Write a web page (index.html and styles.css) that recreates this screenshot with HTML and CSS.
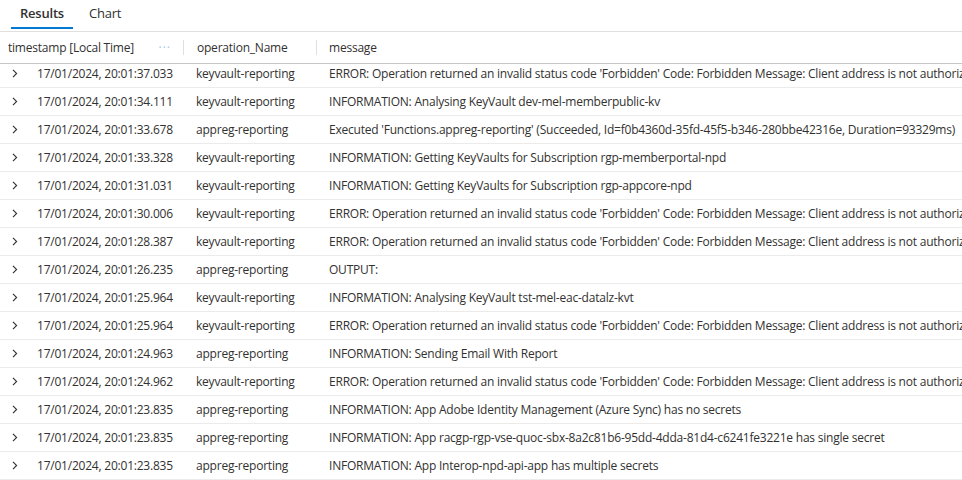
FILE: index.html
```html
<!DOCTYPE html>
<html>
<head>
<meta charset="utf-8">
<link rel="stylesheet" href="styles.css">
</head>
<body>
<div class="tabs">
  <div class="tab active">Results</div>
  <div class="tab">Chart</div>
</div>
<div class="grid">
  <div class="head">
    <div class="hcell c1"><span>timestamp [Local Time]</span><span class="dots">···</span></div>
    <div class="sep"></div>
    <div class="hcell c2">operation_Name</div>
    <div class="sep"></div>
    <div class="hcell c3">message</div>
  </div>
  <div class="body">
    <div class="row"><div class="cell c1"><span class="chev"><svg width="6" height="9" viewBox="0 0 6 9"><path d="M1 0.8 L4.6 4.5 L1 8.2" fill="none" stroke="#323130" stroke-width="1.1"/></svg></span>17/01/2024, 20:01:37.033</div><div class="cell c2">keyvault-reporting</div><div class="cell c3">ERROR: Operation returned an invalid status code 'Forbidden' Code: Forbidden Message: Client address is not authorized and caller is not a trusted service.</div></div>
    <div class="row"><div class="cell c1"><span class="chev"><svg width="6" height="9" viewBox="0 0 6 9"><path d="M1 0.8 L4.6 4.5 L1 8.2" fill="none" stroke="#323130" stroke-width="1.1"/></svg></span>17/01/2024, 20:01:34.111</div><div class="cell c2">keyvault-reporting</div><div class="cell c3">INFORMATION: Analysing KeyVault dev-mel-memberpublic-kv</div></div>
    <div class="row"><div class="cell c1"><span class="chev"><svg width="6" height="9" viewBox="0 0 6 9"><path d="M1 0.8 L4.6 4.5 L1 8.2" fill="none" stroke="#323130" stroke-width="1.1"/></svg></span>17/01/2024, 20:01:33.678</div><div class="cell c2">appreg-reporting</div><div class="cell c3">Executed 'Functions.appreg-reporting' (Succeeded, Id=f0b4360d-35fd-45f5-b346-280bbe42316e, Duration=93329ms)</div></div>
    <div class="row"><div class="cell c1"><span class="chev"><svg width="6" height="9" viewBox="0 0 6 9"><path d="M1 0.8 L4.6 4.5 L1 8.2" fill="none" stroke="#323130" stroke-width="1.1"/></svg></span>17/01/2024, 20:01:33.328</div><div class="cell c2">keyvault-reporting</div><div class="cell c3">INFORMATION: Getting KeyVaults for Subscription rgp-memberportal-npd</div></div>
    <div class="row"><div class="cell c1"><span class="chev"><svg width="6" height="9" viewBox="0 0 6 9"><path d="M1 0.8 L4.6 4.5 L1 8.2" fill="none" stroke="#323130" stroke-width="1.1"/></svg></span>17/01/2024, 20:01:31.031</div><div class="cell c2">keyvault-reporting</div><div class="cell c3">INFORMATION: Getting KeyVaults for Subscription rgp-appcore-npd</div></div>
    <div class="row"><div class="cell c1"><span class="chev"><svg width="6" height="9" viewBox="0 0 6 9"><path d="M1 0.8 L4.6 4.5 L1 8.2" fill="none" stroke="#323130" stroke-width="1.1"/></svg></span>17/01/2024, 20:01:30.006</div><div class="cell c2">keyvault-reporting</div><div class="cell c3">ERROR: Operation returned an invalid status code 'Forbidden' Code: Forbidden Message: Client address is not authorized and caller is not a trusted service.</div></div>
    <div class="row"><div class="cell c1"><span class="chev"><svg width="6" height="9" viewBox="0 0 6 9"><path d="M1 0.8 L4.6 4.5 L1 8.2" fill="none" stroke="#323130" stroke-width="1.1"/></svg></span>17/01/2024, 20:01:28.387</div><div class="cell c2">keyvault-reporting</div><div class="cell c3">ERROR: Operation returned an invalid status code 'Forbidden' Code: Forbidden Message: Client address is not authorized and caller is not a trusted service.</div></div>
    <div class="row"><div class="cell c1"><span class="chev"><svg width="6" height="9" viewBox="0 0 6 9"><path d="M1 0.8 L4.6 4.5 L1 8.2" fill="none" stroke="#323130" stroke-width="1.1"/></svg></span>17/01/2024, 20:01:26.235</div><div class="cell c2">appreg-reporting</div><div class="cell c3">OUTPUT:</div></div>
    <div class="row"><div class="cell c1"><span class="chev"><svg width="6" height="9" viewBox="0 0 6 9"><path d="M1 0.8 L4.6 4.5 L1 8.2" fill="none" stroke="#323130" stroke-width="1.1"/></svg></span>17/01/2024, 20:01:25.964</div><div class="cell c2">keyvault-reporting</div><div class="cell c3">INFORMATION: Analysing KeyVault tst-mel-eac-datalz-kvt</div></div>
    <div class="row"><div class="cell c1"><span class="chev"><svg width="6" height="9" viewBox="0 0 6 9"><path d="M1 0.8 L4.6 4.5 L1 8.2" fill="none" stroke="#323130" stroke-width="1.1"/></svg></span>17/01/2024, 20:01:25.964</div><div class="cell c2">keyvault-reporting</div><div class="cell c3">ERROR: Operation returned an invalid status code 'Forbidden' Code: Forbidden Message: Client address is not authorized and caller is not a trusted service.</div></div>
    <div class="row"><div class="cell c1"><span class="chev"><svg width="6" height="9" viewBox="0 0 6 9"><path d="M1 0.8 L4.6 4.5 L1 8.2" fill="none" stroke="#323130" stroke-width="1.1"/></svg></span>17/01/2024, 20:01:24.963</div><div class="cell c2">appreg-reporting</div><div class="cell c3">INFORMATION: Sending Email With Report</div></div>
    <div class="row"><div class="cell c1"><span class="chev"><svg width="6" height="9" viewBox="0 0 6 9"><path d="M1 0.8 L4.6 4.5 L1 8.2" fill="none" stroke="#323130" stroke-width="1.1"/></svg></span>17/01/2024, 20:01:24.962</div><div class="cell c2">keyvault-reporting</div><div class="cell c3">ERROR: Operation returned an invalid status code 'Forbidden' Code: Forbidden Message: Client address is not authorized and caller is not a trusted service.</div></div>
    <div class="row"><div class="cell c1"><span class="chev"><svg width="6" height="9" viewBox="0 0 6 9"><path d="M1 0.8 L4.6 4.5 L1 8.2" fill="none" stroke="#323130" stroke-width="1.1"/></svg></span>17/01/2024, 20:01:23.835</div><div class="cell c2">appreg-reporting</div><div class="cell c3">INFORMATION: App Adobe Identity Management (Azure Sync) has no secrets</div></div>
    <div class="row"><div class="cell c1"><span class="chev"><svg width="6" height="9" viewBox="0 0 6 9"><path d="M1 0.8 L4.6 4.5 L1 8.2" fill="none" stroke="#323130" stroke-width="1.1"/></svg></span>17/01/2024, 20:01:23.835</div><div class="cell c2">appreg-reporting</div><div class="cell c3">INFORMATION: App racgp-rgp-vse-quoc-sbx-8a2c81b6-95dd-4dda-81d4-c6241fe3221e has single secret</div></div>
    <div class="row"><div class="cell c1"><span class="chev"><svg width="6" height="9" viewBox="0 0 6 9"><path d="M1 0.8 L4.6 4.5 L1 8.2" fill="none" stroke="#323130" stroke-width="1.1"/></svg></span>17/01/2024, 20:01:23.835</div><div class="cell c2">appreg-reporting</div><div class="cell c3">INFORMATION: App Interop-npd-api-app has multiple secrets</div></div>
  </div>
</div>
</body>
</html>
```

FILE: styles.css
```css
html, body {
  margin: 0;
  padding: 0;
  background: #ffffff;
  width: 962px;
  height: 480px;
  overflow: hidden;
}
body {
  font-family: "Open Sans", "Noto Sans", sans-serif;
  color: #323130;
  font-size: 12px;
  letter-spacing: -0.22px;
}
.tabs {
  display: flex;
  height: 32px;
  border-bottom: 1px solid #e1dfdd;
  box-sizing: border-box;
  padding-left: 11px;
}
.tab {
  font-size: 13px;
  line-height: 27px;
  height: 30px;
  box-sizing: border-box;
  padding: 0 9px;
  margin-right: 7px;
  color: #323130;
}
.tab.active {
  font-weight: 600;
  border-bottom: 2px solid #0078d4;
  margin-bottom: 1px;
  height: 29px;
}
.grid {
  overflow: hidden;
}
.head {
  position: relative;
  z-index: 1;
  background: #ffffff;
  display: flex;
  align-items: center;
  height: 32px;
  border-bottom: 1px solid #c8c6c4;
  box-sizing: border-box;
}
.hcell {
  line-height: 31px;
  white-space: nowrap;
}
.hcell.c1 {
  width: 175px;
  padding-left: 8px;
  display: flex;
  justify-content: space-between;
  box-sizing: content-box;
}
.dots {
  color: #a9c6e4;
  letter-spacing: 1px;
  padding-right: 12px;
}
.hcell.c2 {
  width: 119px;
  padding-left: 13px;
}
.hcell.c3 {
  padding-left: 12px;
}
.sep {
  width: 1px;
  height: 15px;
  background: #e1dfdd;
}
.body {
  margin-top: -4px;
}
.row {
  display: grid;
  grid-template-columns: 196px 133px 1fr;
  height: 28px;
  border-bottom: 1px solid #edebe9;
  box-sizing: border-box;
  align-items: center;
  white-space: nowrap;
}
.cell {
  overflow: hidden;
  line-height: 28px;
}
.cell.c1 {
  display: flex;
  align-items: center;
  padding-left: 12px;
}
.chev {
  width: 25px;
  display: flex;
  align-items: center;
}
.chev svg {
  display: block;
}
```
